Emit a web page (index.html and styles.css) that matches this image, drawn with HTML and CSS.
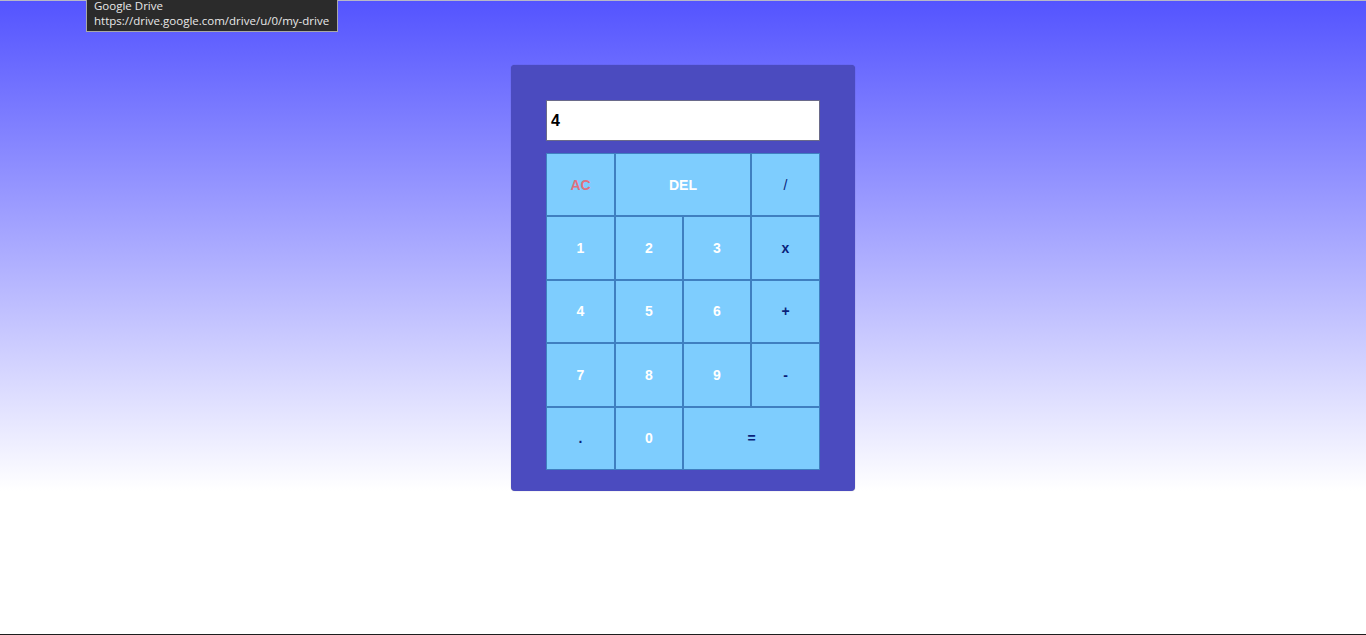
FILE: index.html
```html
<!DOCTYPE html>
<html>
<head>
<meta charset="utf-8">
<link rel="stylesheet" href="styles.css">
</head>
<body>
<div class="top-line"></div>
<div class="page">
  <div class="calc">
    <div class="display">4</div>
    <div class="keys">
      <button class="key ac">AC</button>
      <button class="key num span2">DEL</button>
      <button class="key op slash">/</button>
      <button class="key num">1</button>
      <button class="key num">2</button>
      <button class="key num">3</button>
      <button class="key op">x</button>
      <button class="key num">4</button>
      <button class="key num">5</button>
      <button class="key num">6</button>
      <button class="key op">+</button>
      <button class="key num">7</button>
      <button class="key num">8</button>
      <button class="key num">9</button>
      <button class="key op">-</button>
      <button class="key op">.</button>
      <button class="key num">0</button>
      <button class="key op span2">=</button>
    </div>
  </div>
</div>
<div class="tooltip">
  <div>Google Drive</div>
  <div>https://drive.google.com/drive/u/0/my-drive</div>
</div>
<div class="bottom-line"></div>
</body>
</html>
```
FILE: styles.css
```css
html, body {
  margin: 0;
  padding: 0;
  background: #ffffff;
  height: 635px;
  overflow: hidden;
}
.top-line {
  height: 1px;
  background: #b8b8c8;
}
.page {
  height: 490px;
  background: linear-gradient(to bottom, #5454ff, #ffffff);
  display: flex;
  justify-content: center;
  align-items: flex-start;
}
.calc {
  margin-top: 64px;
  width: 274px;
  padding: 35px 35px 21px 35px;
  background: #4b4bbf;
  border-radius: 4px;
  box-shadow: 0 0 1px rgba(0,0,0,0.4);
}
.display {
  box-sizing: border-box;
  height: 41px;
  background: #ffffff;
  border: 1px solid #6a6a8a;
  font-family: "Liberation Sans", Arial, sans-serif;
  font-weight: bold;
  font-size: 16px;
  color: #000;
  display: flex;
  align-items: center;
  padding-left: 4px;
  margin-bottom: 12px;
}
.keys {
  display: grid;
  grid-template-columns: 69px 68px 68px 69px;
  grid-auto-rows: 63.4px;
}
.key {
  margin: 0;
  background: #7ecdfe;
  border: 1px solid #3f7fc0;
  font-family: "Liberation Sans", Arial, sans-serif;
  font-weight: bold;
  font-size: 14px;
  padding: 0;
  cursor: pointer;
}
.span2 {
  grid-column: span 2;
}
.num {
  color: #ffffff;
}
.op {
  color: #0a1f7a;
}
.slash {
  font-weight: normal;
}
.ac {
  color: #e0707e;
}
.tooltip {
  position: absolute;
  left: 86px;
  top: 0;
  box-sizing: border-box;
  width: 252px;
  height: 32px;
  background: #2b2b2b;
  border: 1px solid #a8a8a8;
  border-top: none;
  color: #e8e8e8;
  font-family: "Open Sans", "Noto Sans", sans-serif;
  font-size: 11.5px;
  line-height: 15px;
  white-space: nowrap;
  padding: 0 0 0 7px;
  margin-top: -3px;
  padding-top: 1px;
  height: 35px;
}
.bottom-line {
  position: absolute;
  left: 0;
  right: 0;
  top: 634px;
  height: 1px;
  background: #1e1e1e;
}
```
